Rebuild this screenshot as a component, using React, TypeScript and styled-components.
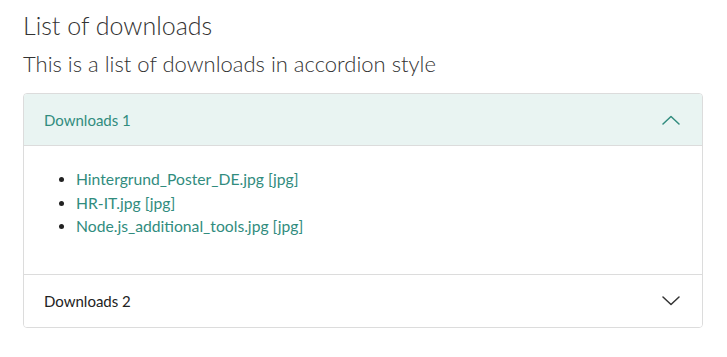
import { useState } from 'react';
import styled, { createGlobalStyle } from 'styled-components';

const GlobalStyle = createGlobalStyle`
  body {
    margin: 0;
    background: #ffffff;
    font-family: Lato, 'Noto Sans', sans-serif;
    color: #222222;
  }
`;

const TEAL = '#318c7e';

type Download = { name: string; type: string };

const groups: { title: string; files: Download[] }[] = [
  {
    title: 'Downloads 1',
    files: [
      { name: 'Hintergrund_Poster_DE.jpg', type: 'jpg' },
      { name: 'HR-IT.jpg', type: 'jpg' },
      { name: 'Node.js_additional_tools.jpg', type: 'jpg' },
    ],
  },
  {
    title: 'Downloads 2',
    files: [],
  },
];

function Chevron({ open }: { open: boolean }) {
  return (
    <svg width='18' height='10' viewBox='0 0 18 10' fill='none'>
      <path
        d={open ? 'M1 9L9 1.5L17 9' : 'M1 1L9 8.5L17 1'}
        stroke={open ? TEAL : '#333333'}
        strokeWidth='1.5'
        strokeLinecap='round'
        strokeLinejoin='round'
      />
    </svg>
  );
}

export default function App() {
  const [openIndex, setOpenIndex] = useState<number | null>(0);

  return (
    <>
      <GlobalStyle />
      <Page>
        <Title>List of downloads</Title>
        <Subtitle>This is a list of downloads in accordion style</Subtitle>
        <Accordion>
          {groups.map((group, i) => {
            const open = openIndex === i;
            return (
              <Item key={group.title} $last={i === groups.length - 1}>
                <Header $open={open} onClick={() => setOpenIndex(open ? null : i)}>
                  <span>{group.title}</span>
                  <Chevron open={open} />
                </Header>
                {open && (
                  <Body>
                    <FileList>
                      {group.files.map((file) => (
                        <li key={file.name}>
                          <FileLink href='#'>
                            {file.name} [{file.type}]
                          </FileLink>
                        </li>
                      ))}
                    </FileList>
                  </Body>
                )}
              </Item>
            );
          })}
        </Accordion>
      </Page>
    </>
  );
}

const Page = styled.div`
  padding: 8px 24px 0 23px;
`;

const Title = styled.h1`
  margin: 0;
  font-size: 25px;
  font-weight: 300;
  line-height: 34px;
  color: #333333;
`;

const Subtitle = styled.h2`
  margin: 8px 0 15px;
  font-size: 22px;
  font-weight: 300;
  line-height: 28px;
  color: #333333;
`;

const Accordion = styled.div`
  border: 1px solid #dcdcdc;
  border-radius: 4px;
  overflow: hidden;
`;

const Item = styled.div<{ $last: boolean }>`
  border-bottom: ${(p) => (p.$last ? 'none' : '1px solid #dcdcdc')};
`;

const Header = styled.button<{ $open: boolean }>`
  display: flex;
  box-sizing: border-box;
  width: 100%;
  align-items: center;
  justify-content: space-between;
  height: 52px;
  padding: 0 22px 0 20px;
  border: none;
  border-bottom: ${(p) => (p.$open ? '1px solid #dcdcdc' : 'none')};
  background: ${(p) => (p.$open ? '#e9f4f2' : '#ffffff')};
  color: ${(p) => (p.$open ? TEAL : '#222222')};
  font-family: inherit;
  font-size: 15px;
  text-align: left;
  cursor: pointer;
`;

const Body = styled.div`
  padding: 22px 20px 35px;
`;

const FileList = styled.ul`
  margin: 0;
  padding-left: 32px;
  font-size: 15.7px;
  line-height: 23.5px;

  li::marker {
    color: #222222;
  }
`;

const FileLink = styled.a`
  color: ${TEAL};
  text-decoration: none;
`;
